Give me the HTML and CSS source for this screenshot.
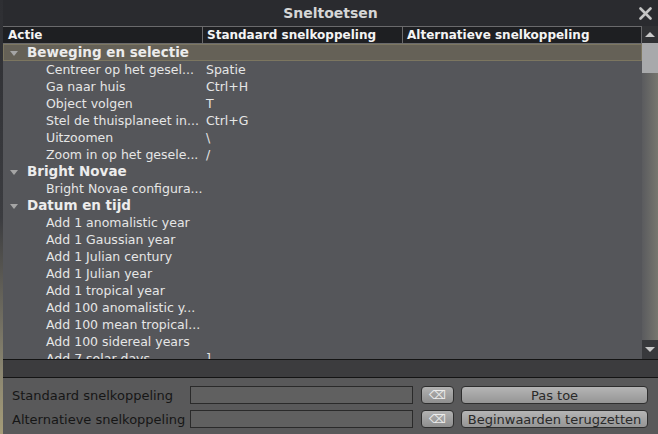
FILE: index.html
```html
<!DOCTYPE html>
<html>
<head>
<meta charset="utf-8">
<link rel="stylesheet" href="styles.css">
</head>
<body>
<div class="dialog">
  <div class="titlebar">
    <span class="title">Sneltoetsen</span>
    <svg class="close" width="13" height="13" viewBox="0 0 13 13"><path d="M1.5 1.5 L11.5 11.5 M11.5 1.5 L1.5 11.5" stroke="#c4c4c4" stroke-width="2.6" stroke-linecap="round"/></svg>
  </div>
  <div class="tablewrap">
    <div class="table">
      <div class="head">
        <div class="hc c1">Actie</div>
        <div class="hc c2">Standaard snelkoppeling</div>
        <div class="hc c3">Alternatieve snelkoppeling</div>
      </div>
      <div class="rows">
        <div class="row group selected"><span class="arrow"></span>Beweging en selectie</div>
        <div class="row"><span class="a">Centreer op het gesel...</span><span class="k">Spatie</span></div>
        <div class="row"><span class="a">Ga naar huis</span><span class="k">Ctrl+H</span></div>
        <div class="row"><span class="a">Object volgen</span><span class="k">T</span></div>
        <div class="row"><span class="a">Stel de thuisplaneet in...</span><span class="k">Ctrl+G</span></div>
        <div class="row"><span class="a">Uitzoomen</span><span class="k">\</span></div>
        <div class="row"><span class="a">Zoom in op het gesele...</span><span class="k">/</span></div>
        <div class="row group"><span class="arrow"></span>Bright Novae</div>
        <div class="row"><span class="a">Bright Novae configura...</span><span class="k"></span></div>
        <div class="row group"><span class="arrow"></span>Datum en tijd</div>
        <div class="row"><span class="a">Add 1 anomalistic year</span><span class="k"></span></div>
        <div class="row"><span class="a">Add 1 Gaussian year</span><span class="k"></span></div>
        <div class="row"><span class="a">Add 1 Julian century</span><span class="k"></span></div>
        <div class="row"><span class="a">Add 1 Julian year</span><span class="k"></span></div>
        <div class="row"><span class="a">Add 1 tropical year</span><span class="k"></span></div>
        <div class="row"><span class="a">Add 100 anomalistic y...</span><span class="k"></span></div>
        <div class="row"><span class="a">Add 100 mean tropical...</span><span class="k"></span></div>
        <div class="row"><span class="a">Add 100 sidereal years</span><span class="k"></span></div>
        <div class="row"><span class="a">Add 7 solar days</span><span class="k">]</span></div>
      </div>
    </div>
    <div class="scrollbar">
      <div class="sb-btn up"><span class="tri-up"></span></div>
      <div class="sb-thumb"></div>
      <div class="sb-track"></div>
      <div class="sb-btn down"><span class="tri-down"></span></div>
    </div>
  </div>
  <div class="band"></div>
  <div class="form">
    <div class="frow">
      <span class="lbl">Standaard snelkoppeling</span>
      <span class="input"></span>
      <span class="clr">&#x232B;</span>
      <span class="btn">Pas toe</span>
    </div>
    <div class="frow">
      <span class="lbl">Alternatieve snelkoppeling</span>
      <span class="input"></span>
      <span class="clr">&#x232B;</span>
      <span class="btn">Beginwaarden terugzetten</span>
    </div>
  </div>
</div>
</body>
</html>
```

FILE: styles.css
```css
html, body {
  margin: 0;
  padding: 0;
}
body {
  width: 658px;
  height: 434px;
  overflow: hidden;
  background: linear-gradient(to bottom, #2e2f33 0%, #3b3c40 50%, #8a8570 85%, #a59c78 100%);
  font-family: "DejaVu Sans", Verdana, sans-serif;
}
.dialog {
  margin-left: 3px;
  width: 655px;
  height: 434px;
  background: #55565a;
  display: flex;
  flex-direction: column;
}
.titlebar {
  height: 26px;
  flex: none;
  background: #2a2b2f;
  display: flex;
  align-items: center;
  justify-content: center;
  position: relative;
}
.title {
  color: #d6d6d6;
  font-weight: bold;
  font-size: 14px;
}
.close {
  position: absolute;
  right: 6px;
  top: 7px;
}
.tablewrap {
  height: 333px;
  flex: none;
  display: flex;
  overflow: hidden;
}
.table {
  flex: 1;
  display: flex;
  flex-direction: column;
  overflow: hidden;
}
.head {
  height: 18px;
  flex: none;
  display: flex;
  background: #1e1f22;
  box-sizing: border-box;
  border-top: 1px solid #6a6a6c;
}
.hc {
  box-sizing: border-box;
  color: #f4f4f4;
  font-weight: bold;
  font-size: 12px;
  line-height: 16px;
  padding-left: 1px;
  border-right: 1px solid #6a6a6c;
  border-bottom: 1px solid #6a6a6c;
}
.c1 { width: 200px; padding-left: 5px; }
.c2 { width: 200px; padding-left: 4px; }
.c3 { flex: 1; padding-left: 4px; }
.rows {
  flex: 1;
  overflow: hidden;
}
.row {
  height: 17px;
  line-height: 17px;
  display: flex;
  color: #e6e6e6;
  font-size: 12.5px;
  white-space: nowrap;
}
.row .a {
  width: 157px;
  padding-left: 43px;
  flex: none;
}
.row .k {
  padding-left: 3px;
}
.group {
  font-weight: bold;
  font-size: 13.5px;
  color: #ececec;
  padding-left: 7px;
  align-items: center;
}
.selected {
  background: #656157;
  box-sizing: border-box;
  border: 1px solid #7c7660;
  padding-left: 6px;
}
.arrow {
  width: 0;
  height: 0;
  border-left: 4px solid transparent;
  border-right: 4px solid transparent;
  border-top: 5px solid #a5a5a5;
  margin-right: 9px;
  margin-top: 1px;
}
.scrollbar {
  width: 16px;
  flex: none;
  display: flex;
  flex-direction: column;
  background: #5e5f62;
}
.sb-btn {
  height: 17px;
  flex: none;
  background: #303134;
  display: flex;
  align-items: center;
  justify-content: center;
}
.sb-btn.down {
  height: 19px;
  background: #38393c;
}
.tri-up {
  width: 0; height: 0;
  border-left: 5px solid transparent;
  border-right: 5px solid transparent;
  border-bottom: 5px solid #c8c8c8;
}
.tri-down {
  width: 0; height: 0;
  border-left: 5px solid transparent;
  border-right: 5px solid transparent;
  border-top: 5px solid #c8c8c8;
}
.sb-thumb {
  height: 30px;
  flex: none;
  background: #a8a9ab;
}
.sb-track {
  flex: 1;
  background: linear-gradient(to right, #5a5b5e, #77766f);
}
.band {
  height: 19px;
  flex: none;
  box-sizing: border-box;
  border-top: 1px solid #141414;
  border-bottom: 1px solid #141414;
  background: #3c3c3e;
}
.form {
  flex: 1;
  display: flex;
  flex-direction: column;
  gap: 6px;
  padding-top: 8px;
  background: #59595a;
}
.frow {
  height: 18px;
  display: flex;
  align-items: center;
}
.lbl {
  width: 178px;
  padding-left: 9px;
  color: #161616;
  font-size: 13px;
  flex: none;
}
.input {
  width: 223px;
  height: 18px;
  box-sizing: border-box;
  border: 1px solid #2a2a2a;
  background: #606060;
  flex: none;
}
.clr {
  margin-left: 8px;
  width: 33px;
  height: 18px;
  box-sizing: border-box;
  border: 1px solid #2e2e2e;
  border-radius: 4px;
  background: linear-gradient(#b2b2b2, #8e8e8e);
  color: #ececec;
  font-size: 12px;
  display: flex;
  align-items: center;
  justify-content: center;
  flex: none;
}
.btn {
  margin-left: 7px;
  width: 187px;
  height: 18px;
  box-sizing: border-box;
  border: 1px solid #2e2e2e;
  border-radius: 4px;
  background: linear-gradient(#b5b5b5, #959595);
  color: #2a2a2a;
  font-size: 13px;
  display: flex;
  align-items: center;
  justify-content: center;
  flex: none;
}
```
